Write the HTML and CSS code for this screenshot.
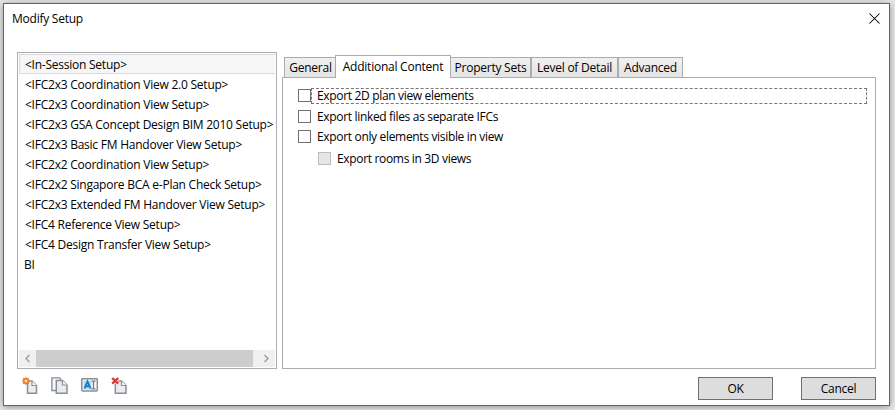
FILE: index.html
```html
<!DOCTYPE html>
<html lang="en">
<head>
<meta charset="utf-8">
<title>Modify Setup</title>
<link rel="stylesheet" href="styles.css">
</head>
<body>
<main class="window">
  <header class="titlebar">
    <h1>Modify Setup</h1>
    <svg class="close" width="11" height="11" viewBox="0 0 11 11"><path d="M.5.5l10 10M10.5.5l-10 10" stroke="#000" stroke-width="1.05"/></svg>
  </header>
  <div class="content">
    <section class="setups">
      <ul>
        <li class="selected"><span>&lt;In-Session Setup&gt;</span></li>
        <li><span>&lt;IFC2x3 Coordination View 2.0 Setup&gt;</span></li>
        <li><span>&lt;IFC2x3 Coordination View Setup&gt;</span></li>
        <li><span>&lt;IFC2x3 GSA Concept Design BIM 2010 Setup&gt;</span></li>
        <li><span>&lt;IFC2x3 Basic FM Handover View Setup&gt;</span></li>
        <li><span>&lt;IFC2x2 Coordination View Setup&gt;</span></li>
        <li><span>&lt;IFC2x2 Singapore BCA e-Plan Check Setup&gt;</span></li>
        <li><span>&lt;IFC2x3 Extended FM Handover View Setup&gt;</span></li>
        <li><span>&lt;IFC4 Reference View Setup&gt;</span></li>
        <li><span>&lt;IFC4 Design Transfer View Setup&gt;</span></li>
        <li class="custom"><span>BI</span></li>
      </ul>
      <div class="scrollbar">
        <svg width="17" height="17" viewBox="0 0 17 17"><path d="M10.5 5L7 8.5l3.5 3.5" fill="none" stroke="#a0a0a0" stroke-width="1.5"/></svg>
        <div class="thumb"></div>
        <svg width="22" height="17" viewBox="0 0 22 17"><path d="M11.5 5L15 8.5 11.5 12" fill="none" stroke="#a0a0a0" stroke-width="1.5"/></svg>
      </div>
    </section>
    <section class="tabs">
      <nav>
        <div class="tab general">General</div>
        <div class="tab active">Additional Content</div>
        <div class="tab property">Property Sets</div>
        <div class="tab level">Level of Detail</div>
        <div class="tab advanced">Advanced</div>
      </nav>
      <div class="panel">
        <div class="option focused"><i></i><span>Export 2D plan view elements</span></div>
        <div class="option linked"><i></i><span>Export linked files as separate IFCs</span></div>
        <div class="option visible"><i></i><span>Export only elements visible in view</span></div>
        <div class="option disabled"><i></i><span>Export rooms in 3D views</span></div>
      </div>
    </section>
  </div>
  <footer>
    <div class="tools">
      <svg width="18" height="18" viewBox="0 0 18 18"><path d="M6.500 4h4.500l4.500 4.500v7.800h-9z" fill="#e9ecf1" stroke="#8b8f96" stroke-width="1.500"/><path d="M11 4v4.500h4.500" fill="#fff" stroke="#8b8f96" stroke-width="1.200"/><circle cx="5" cy="4" r="2.300" fill="#ffe5bd" stroke="#f08030" stroke-width="1.900"/><path d="M5 0v1M5 7v1M1 4h1M8 4h1M2 1l1 1M7 6l1 1M8 1L7 2M2 7l1-1" stroke="#f08030"/></svg>
      <svg width="18" height="18" viewBox="0 0 18 18"><path d="M5 13.500H.9V.9h7.600L10 2.500" fill="#f8f8f9" stroke="#8b8f96" stroke-width="1.400"/><path d="M5.300 3.500H11.500l4.500 4.500v8.300H5.300z" fill="#e9ecf1" stroke="#8b8f96" stroke-width="1.500"/><path d="M11.500 3.500V8H16" fill="#fff" stroke="#8b8f96" stroke-width="1.200"/></svg>
      <svg width="18" height="18" viewBox="0 0 18 18"><rect x=".8" y="1.700" width="15.500" height="12.300" rx=".7" fill="#f4f7fa" stroke="#8b8f96" stroke-width="1.500"/><path d="M2.500 3.500h8v9h-8z" fill="#b2ddf7"/><path d="M3.500 11.500l3-7 3 7M4.500 9.300h4" fill="none" stroke="#217ab9" stroke-width="1.900"/><path d="M10.500 4.200h4M12.500 4.200v7.600M10.500 11.800h4" stroke="#737b83" stroke-width="1.200"/></svg>
      <svg width="18" height="18" viewBox="0 0 18 18"><path d="M4.300 4h6.200L15 8.500v7.800H4.300z" fill="#e9ecf1" stroke="#8b8f96" stroke-width="1.500"/><path d="M10.500 4v4.500H15" fill="#fff" stroke="#8b8f96" stroke-width="1.200"/><path d="M1.200 1l6 5.700M7.200 1l-6 5.700" stroke="#fff" stroke-width="3.500"/><path d="M1.200 1l6 5.700M7.200 1l-6 5.700" stroke="#d33b37" stroke-width="2.400"/></svg>
    </div>
    <div class="buttons"><div class="button">OK</div><div class="button">Cancel</div></div>
  </footer>
</main>
</body>
</html>
```
FILE: styles.css
```css
* { box-sizing: border-box; }
body { margin: 0; width: 895px; height: 410px; overflow: hidden; padding: 3px; background: #e8e8e8; color: #000; font: 12px/16px "Open Sans", "Noto Sans", sans-serif; letter-spacing: -.24px; white-space: nowrap; }
svg { display: block; flex: none; }
.window { width: 887px; height: 403px; padding: 0 13px; border: 1px solid #1879c5; background: #fff; box-shadow: 0 1px 7px rgba(0,0,0,.4); }
.titlebar { height: 48px; display: flex; justify-content: space-between; padding: 7px 0 0; margin: 0 -5px; }
h1 { margin: 0; font: inherit; }
.close { margin: 2px 1px 0 0; }
.content { display: flex; gap: 5px; height: 317px; }
.setups { width: 260px; padding: 1px; border: 1px solid #abadb3; display: flex; flex-direction: column; justify-content: space-between; }
ul { margin: 0; padding: 0; list-style: none; }
li { height: 20px; padding: 3px 0 0 6px; }
.selected { border: 1px solid #dadada; border-right: 0; background: #f6f6f6; padding: 2px 0 0 5px; }
.custom { padding-left: 5px; }
.scrollbar { display: flex; height: 17px; background: #f0f0f0; }
.thumb { flex: 1; background: #cdcdcd; }
.tabs { flex: none; width: 594px; padding-top: 3px; display: flex; flex-direction: column; }
nav { display: flex; align-items: flex-end; height: 23px; margin: 0 0 -1px 2px; position: relative; }
.tab { height: 21px; border: 1px solid #acacac; background: linear-gradient(#f0f0f0, #e5e5e5); text-align: center; padding-top: 2px; }
.general { width: 52px; border-right: 0; }
.active { width: 116px; height: 23px; margin-left: -1px; background: #fff; border-bottom: 0; padding-top: 3px; }
.property { width: 80px; border-left: 0; }
.level { width: 87px; }
.advanced { width: 65px; }
.panel { flex: 1; border: 1px solid #acacac; padding: 10px 8px 0 15px; }
.option { display: flex; align-items: flex-start; height: 16px; letter-spacing: -.33px; }
.option i { flex: none; width: 13px; height: 13px; margin-top: 1px; border: 1px solid #707070; background: #fff; }
.option span { padding-left: 6px; }
.focused span { flex: 1; height: 16px; line-height: 14px; padding-left: 5px; border: 1px dashed #777; }
.linked { margin-top: 5px; }
.visible { margin-top: 4px; }
.disabled { margin: 6px 0 0 20px; }
.disabled i { border-color: #bcbcbc; background: #e6e6e6; }
footer { display: flex; justify-content: space-between; padding: 8px 0 0 4px; }
.tools { display: flex; gap: 12px; }
.buttons { display: flex; gap: 28px; }
.button { width: 75px; height: 23px; border: 1px solid #707070; background: #ddd; text-align: center; line-height: 21px; }
```
